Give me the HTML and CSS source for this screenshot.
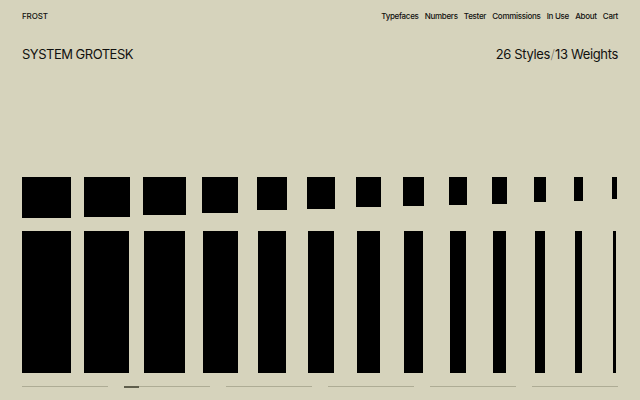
FILE: index.html
```html
<!DOCTYPE html>
<html lang="en">
<head>
<meta charset="utf-8">
<title>Frost — System Grotesk</title>
<link rel="stylesheet" href="styles.css">
</head>
<body>
<header class="top">
  <div class="brand">FROST</div>
  <nav class="nav">
    <a href="#">Typefaces</a>
    <a href="#">Numbers</a>
    <a href="#">Tester</a>
    <a href="#">Commissions</a>
    <a href="#">In Use</a>
    <a href="#">About</a>
    <a href="#">Cart</a>
  </nav>
</header>
<section class="title-row">
  <h1 class="title">SYSTEM GROTESK</h1>
  <div class="meta">26 Styles<span class="slash">/</span>13 Weights</div>
</section>
<section class="weights">
  <div class="col" style="--ml:0px;--w:49px;--h:41px;--b:49px"><div class="sq"></div><div class="bar"></div></div>
  <div class="col" style="--ml:13px;--w:45.5px;--h:40px;--b:44.7px"><div class="sq"></div><div class="bar"></div></div>
  <div class="col" style="--ml:13.8px;--w:42.3px;--h:38.3px;--b:41.3px"><div class="sq"></div><div class="bar"></div></div>
  <div class="col" style="--ml:16.7px;--w:36px;--h:36px;--b:35.3px"><div class="sq"></div><div class="bar"></div></div>
  <div class="col" style="--ml:18.7px;--w:30px;--h:33px;--b:28.7px"><div class="sq"></div><div class="bar"></div></div>
  <div class="col" style="--ml:20.3px;--w:27.3px;--h:31.6px;--b:25.3px"><div class="sq"></div><div class="bar"></div></div>
  <div class="col" style="--ml:21.7px;--w:24.3px;--h:30.3px;--b:22.3px"><div class="sq"></div><div class="bar"></div></div>
  <div class="col" style="--ml:22.7px;--w:21px;--h:29px;--b:19.3px"><div class="sq"></div><div class="bar"></div></div>
  <div class="col" style="--ml:24.7px;--w:17.7px;--h:27.6px;--b:16px"><div class="sq"></div><div class="bar"></div></div>
  <div class="col" style="--ml:25.6px;--w:15px;--h:26.6px;--b:13px"><div class="sq"></div><div class="bar"></div></div>
  <div class="col" style="--ml:27px;--w:11.7px;--h:25px;--b:10px"><div class="sq"></div><div class="bar"></div></div>
  <div class="col" style="--ml:28.3px;--w:8.7px;--h:23.6px;--b:6.7px"><div class="sq"></div><div class="bar"></div></div>
  <div class="col" style="--ml:29.3px;--w:5.3px;--h:22px;--b:3px"><div class="sq"></div><div class="bar"></div></div>
</section>
<section class="pager">
  <div class="seg"></div>
  <div class="seg"><span class="thumb"></span></div>
  <div class="seg"></div>
  <div class="seg"></div>
  <div class="seg"></div>
  <div class="seg"></div>
</section>
</body>
</html>
```
FILE: styles.css
```css
* { box-sizing: border-box; }
html, body {
  margin: 0;
  padding: 0;
  background: #d6d3bc;
}
body {
  width: 640px;
  height: 400px;
  overflow: hidden;
  padding: 0 22px;
  font-family: Inter, "Liberation Sans", Arial, sans-serif;
  color: #11110f;
}
.top {
  display: flex;
  justify-content: space-between;
  align-items: baseline;
  padding-top: 11px;
  font-size: 8px;
  line-height: 10px;
}
.brand {
  font-weight: 500;
  letter-spacing: -0.1px;
}
.nav {
  display: flex;
  gap: 6.2px;
  font-weight: 500;
  letter-spacing: -0.3px;
}
.nav a {
  color: inherit;
  text-decoration: none;
}
.title-row {
  display: flex;
  justify-content: space-between;
  align-items: baseline;
  margin-top: 25px;
  font-size: 13px;
  line-height: 16px;
}
.title {
  margin: 0;
  font-size: inherit;
  font-weight: 400;
  letter-spacing: -0.5px;
}
.meta {
  letter-spacing: -0.35px;
}
.meta .slash {
  font-weight: 200;
  color: #5d5c50;
  margin: 0 0.5px;
}
.weights {
  display: flex;
  align-items: flex-start;
  margin-top: 115px;
}
.col {
  display: flex;
  flex-direction: column;
  align-items: center;
  width: var(--w);
  margin-left: var(--ml);
  flex: none;
}
.sq {
  width: var(--w);
  height: var(--h);
  background: #000;
  margin-bottom: calc(54px - var(--h));
}
.bar {
  width: var(--b);
  height: 142px;
  background: #000;
}
.pager {
  display: grid;
  grid-template-columns: repeat(6, 1fr);
  gap: 16px;
  margin-top: 13px;
}
.seg {
  position: relative;
  height: 1px;
  background: #aeac95;
}
.thumb {
  position: absolute;
  left: 0;
  top: -0.5px;
  width: 15px;
  height: 2px;
  background: #5f5e4c;
}
```
